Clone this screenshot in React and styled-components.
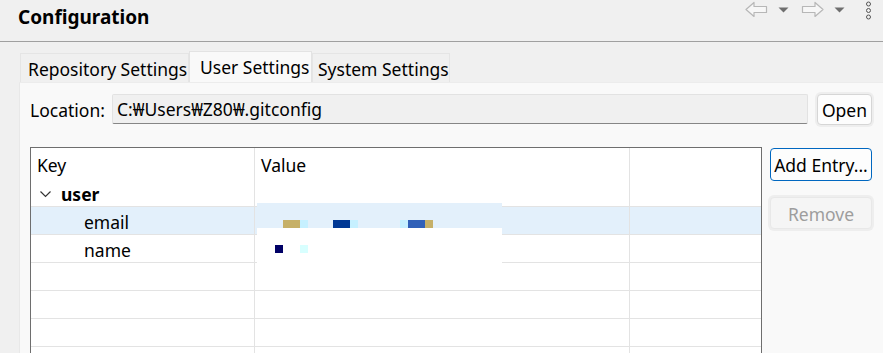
import React from "react";
import styled, { createGlobalStyle } from "styled-components";

const GlobalStyle = createGlobalStyle`
  html, body {
    margin: 0;
    padding: 0;
    background: #f0f0f0;
    font-family: "Noto Sans", "Open Sans", sans-serif;
    color: #000;
    overflow: hidden;
  }
  * { box-sizing: border-box; }
`

const Page = styled.div`
  width: 883px;
  height: 353px;
  overflow: hidden;
  display: flex;
  flex-direction: column;
`
const Header = styled.div`
  height: 42px;
  flex: none;
  display: flex;
  justify-content: space-between;
  border-bottom: 1px solid #a0a0a0;
  padding-left: 18px;
`
const Title = styled.h1`
  margin: 0;
  font-size: 19px;
  font-weight: 700;
  line-height: 35px;
`
const Tools = styled.div`
  display: flex;
  align-items: flex-start;
  padding: 1px 11px 0 0;
`
const ToolIcon = styled.svg`
  display: block;
  margin-left: ${p => p.gap || 0}px;
`
const Body = styled.div`
  flex: 1;
  display: flex;
  flex-direction: column;
  padding: 9px 0 0 19px;
  min-height: 0;
`
const TabBar = styled.div`
  display: flex;
  align-items: flex-end;
  height: 31px;
  padding-left: 1px;
`
const Tab = styled.div`
  width: ${p => p.w}px;
  height: ${p => (p.active ? 31 : 29)}px;
  padding-left: ${p => p.pl}px;
  background: ${p => (p.active ? "#f9f9f9" : "#f0f0f0")};
  border: 1px solid ${p => (p.active ? "#e3e3e3" : "#e5e5e5")};
  border-bottom: none;
  font-size: 17.5px;
  line-height: ${p => (p.active ? 30 : 30)}px;
  white-space: nowrap;
  overflow: hidden;
`
const Panel = styled.div`
  flex: 1;
  background: #f9f9f9;
  border-left: 1px solid #e8e8e8;
  border-top: 1px solid #ececec;
  padding: 10px 11px 0 10px;
  display: flex;
  flex-direction: column;
  min-height: 0;
`
const LocationRow = styled.div`
  display: flex;
  align-items: center;
  height: 32px;
`
const Label = styled.span`
  font-size: 17.5px;
  width: 82px;
  flex: none;
  padding-top: 1px;
`
const Field = styled.div`
  width: 696px;
  height: 30px;
  background: #f0f0f0;
  border: 1px solid #e2e2e2;
  border-bottom: 1px solid #868686;
  border-radius: 2px;
  font-size: 17.5px;
  line-height: 29px;
  padding-left: 4px;
`
const Button = styled.div`
  height: ${p => p.h || 30}px;
  width: ${p => p.w}px;
  margin-left: ${p => p.ml || 0}px;
  margin-top: ${p => p.mt || 0}px;
  display: flex;
  align-items: center;
  justify-content: center;
  padding-top: 1px;
  font-size: 17.5px;
  border-radius: 4px;
  background: ${p => (p.disabled ? "#f5f5f5" : "#fdfdfd")};
  color: ${p => (p.disabled ? "#9d9d9d" : "#000")};
  border: 1px solid ${p => (p.primary ? "#0067c0" : p.disabled ? "#e8e8e8" : "#d6d6d6")};
  box-shadow: ${p => (p.primary ? "none" : "0 0 0 2px #eeeeee")};
`
const Main = styled.div`
  margin-top: 22px;
  display: flex;
  flex: 1;
  min-height: 0;
`
const Table = styled.div`
  position: relative;
  width: 732px;
  flex: none;
  background: #fff;
  border: 1px solid #6e6e6e;
  border-bottom: none;
  overflow: hidden;
`
const Row = styled.div`
  display: grid;
  grid-template-columns: 224px 375px 1fr;
  height: ${p => p.h || 28}px;
  background: ${p => (p.selected ? "#e3f0fb" : "transparent")};
  border-bottom: ${p => (p.plain ? "none" : "1px solid #e3e3e3")};
`
const Cell = styled.div`
  display: flex;
  align-items: ${p => (p.top ? "flex-start" : "center")};
  padding-top: ${p => (p.top ? 5 : 3)}px;
  font-size: 17.5px;
  font-weight: ${p => (p.bold ? 700 : 400)};
  padding-left: ${p => p.indent || 6}px;
  border-right: ${p => (p.last ? "none" : "1px solid #e3e3e3")};
  white-space: nowrap;
`
const Chevron = styled.svg`
  margin-right: 10px;
  flex: none;
`
const Redacted = styled.svg`
  position: absolute;
  left: 226px;
  top: 55px;
`
const Side = styled.div`
  display: flex;
  flex-direction: column;
  margin-left: 8px;
  padding-top: 1px;
`

const BackArrow = () => (
  <ToolIcon width="23" height="17" viewBox="0 0 23 17">
    <path d="M1 8.5 L9 1.5 L9 5.5 L21.5 5.5 L21.5 11.5 L9 11.5 L9 15.5 Z" fill="#f7f7f7" stroke="#b7b7b7" strokeWidth="1.2" strokeLinejoin="round" />
  </ToolIcon>
)
const ForwardArrow = ({ gap }) => (
  <ToolIcon gap={gap} width="23" height="17" viewBox="0 0 23 17">
    <path d="M22 8.5 L14 1.5 L14 5.5 L1.5 5.5 L1.5 11.5 L14 11.5 L14 15.5 Z" fill="#f7f7f7" stroke="#b7b7b7" strokeWidth="1.2" strokeLinejoin="round" />
  </ToolIcon>
)
const Drop = ({ gap }) => (
  <ToolIcon gap={gap} width="11" height="17" viewBox="0 0 11 17">
    <path d="M0.5 6.5 L10.5 6.5 L5.5 11.5 Z" fill="#6e6e6e" />
  </ToolIcon>
)
const Kebab = ({ gap }) => (
  <ToolIcon gap={gap} width="7" height="22" viewBox="0 0 7 22">
    <circle cx="3.5" cy="3" r="2" fill="none" stroke="#555" strokeWidth="1" />
    <circle cx="3.5" cy="9.5" r="2" fill="none" stroke="#555" strokeWidth="1" />
    <circle cx="3.5" cy="16" r="2" fill="none" stroke="#555" strokeWidth="1" />
  </ToolIcon>
)

export default function App() {
  const emptyRows = [0, 1, 2, 3]

  return (
    <Page>
      <GlobalStyle />
      <Header>
        <Title>Configuration</Title>
        <Tools>
          <BackArrow />
          <Drop gap={10} />
          <ForwardArrow gap={12} />
          <Drop gap={10} />
          <Kebab gap={20} />
        </Tools>
      </Header>

      <Body>
        <TabBar>
          <Tab w={169} pl={7}>Repository Settings</Tab>
          <Tab active w={123} pl={10}>User Settings</Tab>
          <Tab w={138} pl={5}>System Settings</Tab>
        </TabBar>
        <Panel>
          <LocationRow>
            <Label>Location:</Label>
            <Field>C:₩Users₩Z80₩.gitconfig</Field>
            <Button w={55} h={31} ml={9}>Open</Button>
          </LocationRow>

          <Main>
            <Table>
              <Row h={31} plain>
                <Cell top>Key</Cell>
                <Cell top>Value</Cell>
                <Cell last />
              </Row>
              <Row>
                <Cell bold indent={9}>
                  <Chevron width="11" height="7" viewBox="0 0 11 7">
                    <path d="M0.5 0.5 L5.5 5.5 L10.5 0.5" fill="none" stroke="#333" strokeWidth="1.2" />
                  </Chevron>
                  user
                </Cell>
                <Cell />
                <Cell last />
              </Row>
              <Row selected>
                <Cell indent={53}>email</Cell>
                <Cell />
                <Cell last />
              </Row>
              <Row>
                <Cell indent={53}>name</Cell>
                <Cell />
                <Cell last />
              </Row>
              {emptyRows.map(i => (
                <Row key={i}>
                  <Cell />
                  <Cell />
                  <Cell last />
                </Row>
              ))}

              <Redacted width="245" height="60" viewBox="0 0 245 60">
                <rect x="0" y="0" width="245" height="25" fill="#e3f0fb" />
                <rect x="0" y="25" width="245" height="35" fill="#ffffff" />
                <rect x="26" y="17" width="17" height="8" fill="#c6b068" />
                <rect x="43" y="17" width="8" height="8" fill="#c6f0ff" />
                <rect x="76" y="17" width="17" height="8" fill="#003894" />
                <rect x="93" y="17" width="8" height="8" fill="#c6f0ff" />
                <rect x="143" y="17" width="8" height="8" fill="#c6f0ff" />
                <rect x="151" y="17" width="17" height="8" fill="#3060b8" />
                <rect x="168" y="17" width="8" height="8" fill="#c6b068" />
                <rect x="18" y="42" width="8" height="8" fill="#000066" />
                <rect x="43" y="42" width="8" height="8" fill="#d8ffff" />
              </Redacted>
            </Table>

            <Side>
              <Button primary w={102} h={33}>Add Entry...</Button>
              <Button disabled w={102} h={32} mt={16}>Remove</Button>
            </Side>
          </Main>
        </Panel>
      </Body>
    </Page>
  )
}
